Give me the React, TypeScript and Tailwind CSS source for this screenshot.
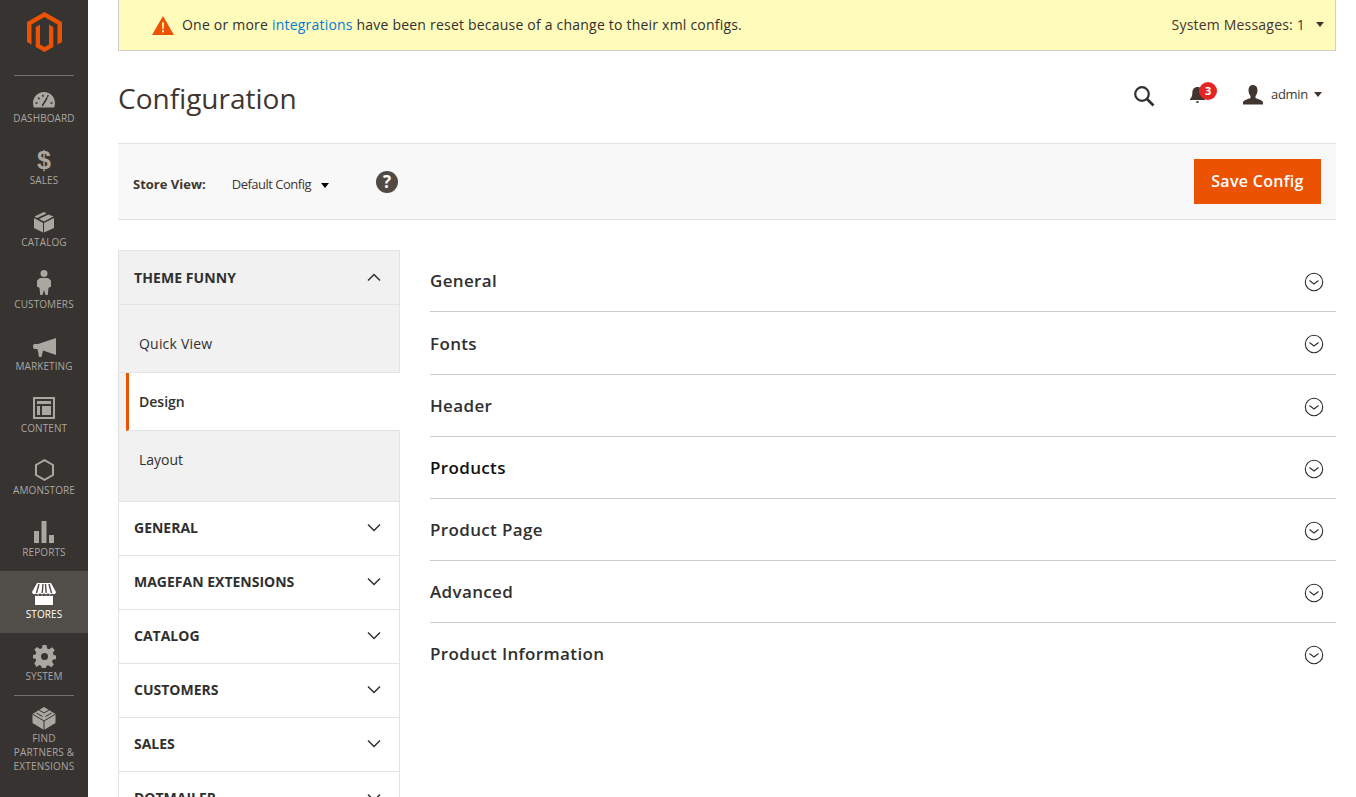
import React from "react";

const Dash = () => (
  <svg width="24" height="18" viewBox="0 0 24 18">
    <path fill="#aaa6a0" fillRule="evenodd" d="M12 1C5.4 1 1 6.4 1 12c0 1.600.3 3.200.8 4.500h20.400c.5-1.300.8-2.900.8-4.500C23 6.400 18.600 1 12 1Z" />
    <path stroke="#373330" strokeWidth="1.500" strokeLinecap="round" d="M10.500 14.500 15 7M4 12h1M6.500 7l.7.7M11 4.200v1M16 4.500l-.4 .8M20 12h-1" fill="none" />
  </svg>
);
const Dollar = () => <span className="block text-[#aaa6a0] text-[25px] leading-[24px] font-bold font-['Liberation_Sans',sans-serif] -mb-px">$</span>;
const Box = () => (
  <svg width="22" height="22" viewBox="0 0 22 22">
    <path fill="#aaa6a0" d="M11 1 1.500 5.500 4 7l9.500-4.600zM15.500 3.400 6 8l5 2.500L20.500 5.500zM1 7v10l9 4.500V12zM21 7l-10 5v9.500l10-4.500z" />
  </svg>
);
const Person = () => (
  <svg width="14" height="25" viewBox="0 0 14 25">
    <circle cx="7" cy="3.600" r="3.500" fill="#aaa6a0" />
    <path fill="#aaa6a0" d="M3 8h8l3 2.500v6L11.500 18l-.7 7H8.500L7 20l-1.500 5H3.200l-.7-7L0 16.500v-6z" />
  </svg>
);
const Mega = () => (
  <svg width="23" height="19" viewBox="0 0 23 19">
    <path fill="#aaa6a0" d="M23 0v17L10 12.500 8.500 19H6L4.500 11H1.500C.7 11 0 10 0 8.500S.7 6 1.500 6H5z" />
  </svg>
);
const Content = () => (
  <svg width="22" height="22" viewBox="0 0 22 22">
    <path fill="#aaa6a0" fillRule="evenodd" d="M0 0h22v22H0zM2 2v18h18V2zM4 4h14v3H4zM4 9h3v9H4zM9 9h9v9H9z" />
  </svg>
);
const Hex = () => (
  <svg width="19" height="22" viewBox="0 0 19 22">
    <path fill="none" stroke="#aaa6a0" strokeWidth="2" d="M9.500 1.200 18 6v10l-8.500 4.800L1 16V6z" />
  </svg>
);
const Bars = () => (
  <svg width="20" height="22" viewBox="0 0 20 22">
    <path fill="#aaa6a0" d="M0 10h5v12H0zM7.500 0h5v22h-5zM15 14h5v8h-5z" />
  </svg>
);
const Store = () => (
  <svg width="24" height="22" viewBox="0 0 24 22">
    <path fill="#fff" d="M3 22V12.500c1 .7 2.500.7 3.500 0 1.200.8 2.500.8 3.500 0 1.200.8 2.800.8 4 0 1 .8 2.300.8 3.500 0 1 .7 2.500.7 3.500 0V22z" />
    <path fill="#fff" d="M5 0h14l5 9c0 2-2.500 3-4 1.500-1 1.200-3 1.200-4-.2-1 1.400-3 1.400-4 0-1 1.400-3 1.400-4 0-1 1.400-3 1.400-4 .2C2.500 12 0 11 0 9z" />
    <path stroke="#4f4b47" strokeWidth="1.400" d="M7 1 4.500 10M11 1l-.8 9M13.500 1l.7 9M17 1l2.500 9" />
  </svg>
);
const Gear = () => (
  <svg width="23" height="23" viewBox="0 0 23 23" className="-mb-px">
    <path fill="#aaa6a0" fillRule="evenodd" d="M9.500 0h4l.6 3.400 2 .8L19 2.300 21.700 5 19.800 8l.8 2 2.400.5v3.500l-3.200.7-.8 2 1.900 2.800-2.700 2.700-2.900-1.900-2 .8-.7 2.900h-3.600l-.7-3.100-2-.8-2.800 1.900L1.300 18.400l1.900-2.800-.8-2L0 13.500V10l2.500-.6.800-2L1.300 4.500 4 2 7 4l2-.8zM11.500 8a3.500 3.500 0 1 0 0 7 3.500 3.500 0 0 0 0-7z" />
  </svg>
);
const Lego = () => (
  <svg width="24" height="23" viewBox="0 0 24 23">
    <path fill="#aaa6a0" d="M12 0 23.500 7v9L12 23 .5 16V7z" />
    <path stroke="#373330" strokeWidth="1" fill="none" d="M.5 7 12 14l11.500-7M12 14v9M7 3l5 3 5-3M4.500 6l6 3.500M13.500 9.500l6-3.500" />
  </svg>
);

const navItems: [string, React.ReactNode, boolean?][] = [
  ["DASHBOARD", <Dash />],
  ["SALES", <Dollar />],
  ["CATALOG", <Box />],
  ["CUSTOMERS", <Person />],
  ["MARKETING", <Mega />],
  ["CONTENT", <Content />],
  ["AMONSTORE", <Hex />],
  ["REPORTS", <Bars />],
  ["STORES", <Store />, true],
  ["SYSTEM", <Gear />],
];

const Chevron = ({ up }: { up?: boolean }) => (
  <svg width="14" height="9" viewBox="0 0 14 9" className="mr-[18px]">
    <path d={up ? "M1 7.500 7 1.500l6 6" : "M1 1.500l6 6 6-6"} fill="none" stroke="#303030" strokeWidth="1.500" />
  </svg>
);

const CircleDown = ({ nudge }: { nudge: boolean }) => (
  <svg width="20" height="20" viewBox="0 0 20 20" className={`mr-[12px] ${nudge ? "mt-[3px]" : "mt-[1px]"}`}>
    <circle cx="10" cy="10" r="8.700" fill="none" stroke="#303030" strokeWidth="1.100" />
    <path d="M5.500 8.500 10 12l4.500-3.500" fill="none" stroke="#303030" strokeWidth="1.100" />
  </svg>
);

const sections: [string, number, string?][] = [
  ["General", 62],
  ["Fonts", 63],
  ["Header", 62],
  ["Products", 62, "text-[#111]"],
  ["Product Page", 62],
  ["Advanced", 62],
  ["Product Information", 62],
];

const Caret = ({ c = "#303030" }: { c?: string }) => (
  <span className="inline-block w-0 h-0 border-x-[4.500px] border-x-transparent border-t-[5px]" style={{ borderTopColor: c }} />
);

export default function App() {
  return (
    <div className="flex h-[797px] w-[1356px] overflow-hidden bg-white font-['Open_Sans',sans-serif] text-[#303030]">
      <aside className="w-[88px] shrink-0 bg-[#373330] flex flex-col items-center">
        <div className="h-[75px] w-full flex flex-col items-center shrink-0">
          <svg width="35" height="40" viewBox="0 0 35 40" className="mt-[12px]">
            <path fill="#eb5202" d="M17.500 0 35 10v20l-4.500 2.500v-20l-13-7.500-13 7.500v20L0 30V10zM17.500 40l-8.800-5V15l4.300-2.500v20l4.500 2.500 4.500-2.500v-20l4.300 2.500v20z" />
          </svg>
        </div>
        <div className="w-[60px] h-px bg-[#736f6b] shrink-0 -mb-px" />
        <div className="w-full shrink-0">
          {navItems.map(([label, icon, active]) => (
            <div key={label} className={`h-[62px] w-full flex flex-col items-center ${active ? "bg-[#514d49] text-white" : "text-[#aaa6a0]"}`}>
              <div className="h-[35px] flex items-end justify-center shrink-0 pb-[1px]">{icon}</div>
              <div className="text-[10px] leading-[14px] mt-[1px] whitespace-nowrap tracking-[0.1px]">{label}</div>
            </div>
          ))}
        </div>
        <div className="w-[60px] h-px bg-[#736f6b] shrink-0" />
        <div className="flex flex-col items-center pt-[11px] text-[#aaa6a0]">
          <Lego />
          <div className="text-[10px] leading-[14px] mt-[1px] text-center tracking-[0.2px]">FIND<br />PARTNERS &amp;<br />EXTENSIONS</div>
        </div>
      </aside>

      <main className="w-[1268px] pl-[30px] pr-[20px] flex flex-col">
        <div className="h-[51px] shrink-0 bg-[#fffbbb] border border-t-0 border-[#cfcfcf] flex items-center justify-between pl-[33px] pr-[11px]">
          <div className="flex items-center">
            <svg width="22" height="19" viewBox="0 0 22 19" className="mr-[8px] mt-[1px]">
              <path fill="#eb5202" d="M11 0 22 19H0z" />
              <path fill="#fffbbb" d="M10 6.500h2l-.3 6.500h-1.400zM10 14.200h2v2h-2z" />
            </svg>
            <span className="text-[14px] leading-[20px] tracking-[0.21px]">One or more <span className="text-[#007bdb]">integrations</span> have been reset because of a change to their xml configs.</span>
          </div>
          <div className="flex items-center text-[14px] text-[#41362f] tracking-[0.2px] mb-[2px]">
            <span>System Messages: 1</span>
            <span className="ml-[11px] flex"><Caret c="#41362f" /></span>
          </div>
        </div>

        <div className="h-[92px] shrink-0 flex items-center justify-between pb-[2px]">
          <h1 className="text-[28px] font-normal leading-[36px] text-[#41362f] mt-[4px]">Configuration</h1>
          <div className="flex items-center pr-[14px] mb-[3px]">
            <svg width="22" height="22" viewBox="0 0 22 22" className="mr-[35px] mt-[2px]">
              <circle cx="9" cy="9" r="6.800" fill="none" stroke="#303030" strokeWidth="2.200" />
              <path d="m14 14 6.500 6.500" stroke="#303030" strokeWidth="2.600" />
            </svg>
            <div className="relative w-[16px] h-[20px] mr-[37px]">
              <svg width="15" height="17" viewBox="0 0 16 19" preserveAspectRatio="none" className="mt-[2px]">
                <path fill="#41362f" d="M8 0c3.500 0 5.500 2.500 5.500 6.500 0 3 .5 5 2.500 7v1H0v-1c2-2 2.500-4 2.500-7C2.500 2.500 4.500 0 8 0zM6.500 16h3c0 1-.5 2-1.500 2s-1.500-1-1.500-2z" />
              </svg>
              <span className="absolute left-[9px] top-[-3px] w-[18px] h-[18px] rounded-full bg-[#e22626] text-white text-[11px] font-bold flex items-center justify-center leading-none">3</span>
            </div>
            <svg width="20" height="20" viewBox="0 0 20 20" className="mr-[8px]">
              <path fill="#41362f" d="M10 0c3 0 4.500 2.200 4.500 5s-1 5-2 6v2c2 1 7.500 2 7.500 4.500V19.500H0V17.500C0 15 5.500 14 7.500 13v-2c-1-1-2-3-2-6s1.500-5 4.500-5z" />
            </svg>
            <span className="text-[13px] text-[#41362f] mr-[6px] tracking-[-0.3px]">admin</span>
            <Caret c="#41362f" />
          </div>
        </div>

        <div className="h-[77px] shrink-0 bg-[#f8f8f8] border-y border-[#e3e3e3] flex items-center justify-between pl-[15px] pr-[15px]">
          <div className="flex items-center">
            <span className="text-[13px] font-bold text-[#41362f] mr-[26px] mt-[7px]">Store View:</span>
            <span className="text-[13px] tracking-[-0.5px] text-[#41362f] mr-[10px] mt-[7px]">Default Config</span>
            <span className="flex mt-[7px] mr-[47px]"><Caret c="#000" /></span>
            <span className="w-[22px] h-[22px] rounded-full bg-[#514943] text-white font-bold text-[17px] leading-none flex items-center justify-center">?</span>
          </div>
          <button className="h-[45px] w-[127px] bg-[#eb5202] text-white text-[16px] font-semibold tracking-[0.3px] pb-[2px]">Save Config</button>
        </div>

        <div className="flex mt-[30px] items-start">
          <div className="w-[282px] shrink-0 border-x border-[#e3e3e3] border-t">
            <div className="h-[54px] bg-[#f1f1f1] border-b border-[#e3e3e3] flex items-center justify-between pl-[15px]">
              <span className="text-[14px] font-bold text-[#303030] tracking-[0.08px]">THEME FUNNY</span>
              <Chevron up />
            </div>
            <div className="bg-[#f1f1f1]">
              <div className="h-[68px] flex items-end pl-[20px] pb-[18px] border-b border-[#e3e3e3] -mr-px">
                <span className="text-[14px] leading-[20px] tracking-[0.2px]">Quick View</span>
              </div>
              <div className="h-[58px] flex items-center bg-white ml-[7px] border-l-[3px] border-[#eb5202] -mr-px border-b border-b-[#e3e3e3] pl-[10px]">
                <span className="text-[14px] font-semibold leading-[20px]">Design</span>
              </div>
              <div className="h-[70px] pl-[20px] pt-[19px]">
                <span className="text-[14px] leading-[20px] block">Layout</span>
              </div>
            </div>
            {["GENERAL", "MAGEFAN EXTENSIONS", "CATALOG", "CUSTOMERS", "SALES", "DOTMAILER"].map((t) => (
              <div key={t} className="h-[54px] border-t border-[#e3e3e3] flex items-center justify-between pl-[15px] pb-[2px]">
                <span className="text-[14px] font-bold text-[#303030]">{t}</span>
                <Chevron />
              </div>
            ))}
          </div>

          <div className="ml-[30px] flex-1">
            {sections.map(([t, h, c], i) => (
              <div key={t} style={{ height: h }} className={`flex items-center justify-between ${i < sections.length - 1 ? "border-b border-[#cccccc]" : ""}`}>
                <span className={`text-[17px] font-semibold tracking-[0.35px] ${c ?? "text-[#303030]"} ${t === "Fonts" ? "mt-[2px]" : ""}`}>{t}</span>
                <CircleDown nudge={t !== "Fonts" && t !== "Product Information"} />
              </div>
            ))}
          </div>
        </div>
      </main>
    </div>
  );
}
